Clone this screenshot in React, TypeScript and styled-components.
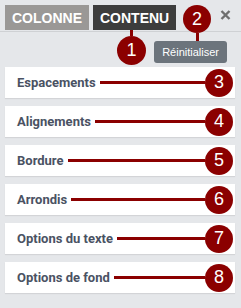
import React from "react";
import styled, { createGlobalStyle } from "styled-components";

const Global = createGlobalStyle`
  html, body { margin: 0; padding: 0; }
  body { background: #e5e7ea; width: 241px; height: 308px; overflow: hidden; }
  #root { width: 241px; height: 308px; }
`;

const RED = "#8b0000";

const Panel = styled.div`
  position: relative;
  width: 241px;
  height: 308px;
  background: #e5e7ea;
  display: flex;
  flex-direction: column;
`;

const Header = styled.div`
  display: flex;
  align-items: flex-start;
  gap: 4px;
  padding: 5px 10px 1px 5px;
  border-bottom: 1px solid #cfd1d4;
`;

const Tab = styled.div<{ $active?: boolean }>`
  position: relative;
  height: 25px;
  padding: 0 7px;
  display: flex;
  align-items: center;
  background: ${(p) => (p.$active ? "#3d3d3d" : "#9a9896")};
  color: #fff;
  font-family: "Liberation Sans", Arial, sans-serif;
  font-weight: bold;
  font-size: 14px;
`;

const Close = styled.div`
  margin-left: auto;
  margin-top: 5px;
  width: 11px;
  height: 10px;
  display: flex;
`;

const Badge = styled.div<{ $size?: number }>`
  width: ${(p) => p.$size ?? 28}px;
  height: ${(p) => p.$size ?? 28}px;
  flex: none;
  border-radius: 50%;
  background: ${RED};
  color: #fff;
  font-family: "Liberation Sans", Arial, sans-serif;
  font-size: 18px;
  display: flex;
  align-items: center;
  justify-content: center;
`;

const Floating = styled.div<{ $left: number; $top: number }>`
  position: absolute;
  left: ${(p) => p.$left}px;
  top: ${(p) => p.$top}px;
  display: flex;
  flex-direction: column;
  align-items: center;
`;

const Stem = styled.div<{ $h: number }>`
  width: 3px;
  height: ${(p) => p.$h}px;
  background: ${RED};
`;

const Toolbar = styled.div`
  display: flex;
  justify-content: flex-end;
  padding: 9px 14px 0 0;
`;

const ResetButton = styled.div`
  height: 22px;
  padding: 0 8px;
  border-radius: 3px;
  background: #6c747c;
  color: #fff;
  font-family: "Liberation Sans", Arial, sans-serif;
  font-size: 11px;
  display: flex;
  align-items: center;
`;

const List = styled.div`
  display: flex;
  flex-direction: column;
  gap: 8px;
  padding: 4px 6px 0 5px;
`;

const Row = styled.div`
  height: 31px;
  background: #fff;
  box-shadow: 0 1px 1px rgba(0, 0, 0, 0.08);
  display: flex;
  align-items: center;
  padding: 0 2px 0 12px;
`;

const Label = styled.span`
  font-family: Roboto, "Liberation Sans", sans-serif;
  font-weight: bold;
  font-size: 13px;
  color: #4a5263;
  white-space: nowrap;
`;

const Leader = styled.div`
  flex: 1;
  height: 3px;
  margin-left: 4px;
  background: ${RED};
`;

const items = [
  "Espacements",
  "Alignements",
  "Bordure",
  "Arrondis",
  "Options du texte",
  "Options de fond",
];

export default function App() {
  return (
    <>
      <Global />
      <Panel>
        <Header>
          <Tab>COLONNE</Tab>
          <Tab $active>CONTENU</Tab>
          <Close>
            <svg width="11" height="10" viewBox="0 0 11 10">
              <path d="M1.5 1 L9.5 9 M9.5 1 L1.5 9" stroke="#6f6f6f" strokeWidth="2.4" />
            </svg>
          </Close>
        </Header>
        <Toolbar>
          <ResetButton>Réinitialiser</ResetButton>
        </Toolbar>
        <List>
          {items.map((t, i) => (
            <Row key={t}>
              <Label>{t}</Label>
              <Leader />
              <Badge>{i + 3}</Badge>
            </Row>
          ))}
        </List>
        <Floating $left={117} $top={30}>
          <Stem $h={6} />
          <Badge $size={29}>1</Badge>
        </Floating>
        <Floating $left={183} $top={5}>
          <Badge>2</Badge>
          <Stem $h={8} />
        </Floating>
      </Panel>
    </>
  );
}
